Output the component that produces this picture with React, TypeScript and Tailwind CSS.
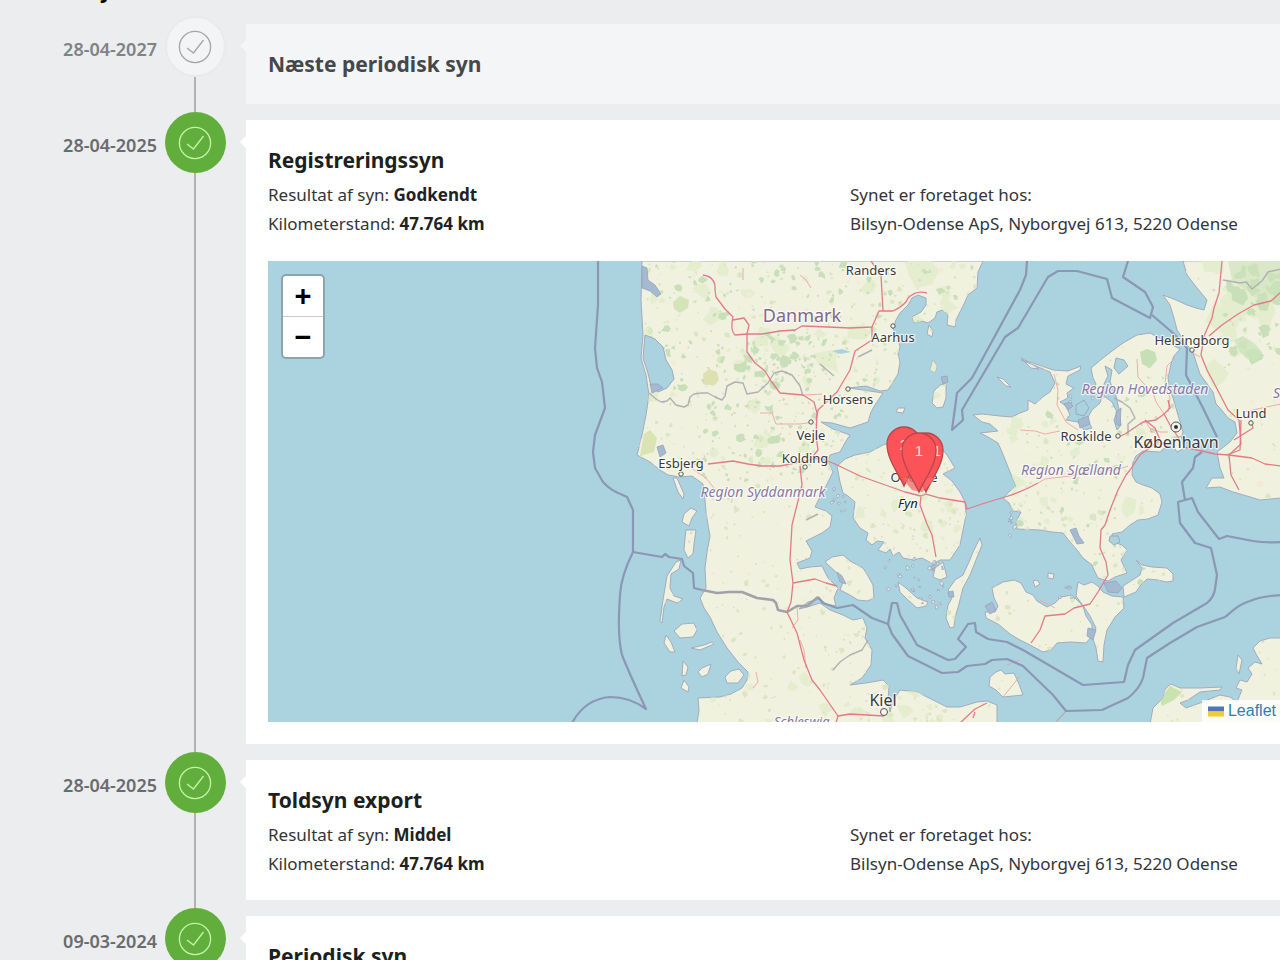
import React from "react";

type Inspection = {
  date: string;
  title: string;
  upcoming?: boolean;
  result?: string;
  mileage?: string;
  place?: string;
  map?: boolean;
};

const INSPECTIONS: Inspection[] = [
  { date: "28-04-2027", title: "Næste periodisk syn", upcoming: true },
  {
    date: "28-04-2025",
    title: "Registreringssyn",
    result: "Godkendt",
    mileage: "47.764 km",
    place: "Bilsyn-Odense ApS, Nyborgvej 613, 5220 Odense",
    map: true,
  },
  {
    date: "28-04-2025",
    title: "Toldsyn export",
    result: "Middel",
    mileage: "47.764 km",
    place: "Bilsyn-Odense ApS, Nyborgvej 613, 5220 Odense",
  },
  { date: "09-03-2024", title: "Periodisk syn" },
];

/* Coastlines, in map units */
const LAND = [
  // Jutland and Schleswig
  "M642 261L641 300L643 335L641 358L646 375L649 395L646 415L641 440L637 455L650 462L660 470L668 475L680 477L692 476L703 484L705 500L706 512L708 525L710 536L707 552L705 568L706 588L700 598L704 608L710 617L717 632L727 648L738 662L748 672L747 680L742 688L731 694L720 697L698 698L699 710L697 723L997 723L997 705L987 701L977 702L960 707L947 707L933 700L917 692L900 690L893 701L890 712L888 700L889 686L883 680L866 683L850 685L862 678L871 665L872 650L865 638L867 628L863 618L853 620L843 615L830 610L820 603L807 607L799 609L808 602L820 599L826 604L836 606L834 598L838 588L828 578L822 566L810 567L800 569L797 563L810 558L812 551L806 541L822 533L830 527L832 516L826 511L815 507L820 497L826 486L833 472L828 462L830 455L840 452L846 441L850 435L833 429L821 422L832 423L850 428L868 422L871 412L875 405L883 393L863 390L849 388L866 386L880 391L888 390L893 382L898 374L900 362L898 354L900 347L897 335L893 329L896 320L900 313L908 305L912 298L918 295L926 298L926 305L921 312L912 317L914 323L922 321L928 323L935 318L937 312L942 310L948 315L947 325L955 327L956 320L960 312L964 304L968 295L977 288L978 272L983 261Z",
  // Als
  "M825 562L832 557L843 555L850 561L863 568L868 576L873 585L874 598L867 601L858 600L848 594L840 590L843 582L838 574Z",
  // Fyn
  "M837 466L845 459L855 455L870 452L883 445L895 441L925 441L935 441L947 455L955 468L943 474L952 481L960 492L965 502L966 515L963 530L960 545L950 560L940 560L933 564L922 558L913 560L903 558L899 552L893 556L890 549L886 553L878 550L884 542L877 541L872 545L866 540L868 533L860 528L853 518L855 502L848 496L843 493L840 482Z",
  // Langeland, Tåsinge, Ærø
  "M980 538L982 545L976 560L970 575L963 588L959 604L955 618L954 627L950 628L946 618L948 605L952 598L948 590L955 580L963 575L969 562L973 552Z",
  "M943 562L947 577L940 580L933 577L935 568Z",
  "M898 582L906 588L917 598L928 602L926 606L917 608L908 600L900 592Z",
  // Samsø and small Kattegat islands
  "M940 385L946 384L946 398L943 407L937 408L932 403L934 391Z",
  "M933 360L937 366L935 373L930 370Z",
  "M929 325L933 331L932 337L927 334Z",
  "M898 408L905 408L903 413L896 412Z",
  "M1021 358L1032 364L1039 369L1031 368Z",
  "M997 377L1003 379L1011 387L1006 386Z",
  // Sjælland
  "M973 415L982 414L1000 416L1012 417L1020 413L1028 410L1028 400L1035 404L1044 396L1050 392L1055 383L1050 372L1036 366L1021 360L1033 363L1053 370L1068 371L1081 366L1080 370L1068 376L1066 384L1074 388L1067 393L1068 398L1060 402L1066 406L1070 415L1066 420L1078 422L1084 430L1092 428L1087 419L1092 410L1100 403L1102 396L1092 392L1096 384L1093 378L1091 368L1103 358L1112 351L1123 343L1137 335L1150 333L1163 340L1180 349L1174 356L1171 364L1168 378L1170 390L1173 398L1178 415L1183 432L1180 443L1172 441L1160 452L1143 451L1136 456L1133 462L1132 475L1136 482L1143 485L1152 488L1160 494L1162 502L1158 515L1148 519L1138 520L1130 525L1122 532L1112 534L1113 542L1122 545L1127 550L1121 560L1127 573L1115 577L1108 581L1098 578L1094 570L1092 565L1083 558L1077 550L1070 542L1063 533L1052 532L1040 530L1017 529L1016 522L1021 512L1013 511L1009 503L1003 498L1010 491L1016 486L1010 472L1006 462L1002 452L998 443L988 437L980 433L998 431L990 424L982 422Z",
  // Amager
  "M1170 441L1181 436L1184 448L1177 452Z",
  // Lolland
  "M992 588L1003 582L1014 580L1021 583L1026 592L1033 595L1037 601L1047 607L1055 603L1061 597L1072 595L1083 606L1086 616L1092 625L1092 636L1086 643L1070 642L1057 643L1051 650L1043 652L1030 645L1020 640L1010 634L998 624L986 618L985 612L995 612L998 606L994 598Z",
  // Falster
  "M1078 582L1084 585L1092 582L1098 586L1103 592L1112 596L1123 597L1124 608L1115 617L1107 630L1104 645L1103 662L1098 661L1096 648L1092 636L1096 628L1090 616L1084 607L1076 596Z",
  // Møn
  "M1123 586L1134 579L1140 575L1142 568L1136 560L1142 565L1152 567L1167 568L1173 574L1173 581L1166 582L1158 580L1147 579L1140 586L1136 592L1124 597Z",
  "M1033 581L1037 580L1040 584L1035 587Z",
  "M1048 573L1054 574L1053 579L1048 578Z",
  // Sweden
  "M1183 261L1187 275L1197 288L1207 300L1204 310L1196 308L1187 305L1176 300L1163 295L1170 305L1174 318L1177 330L1187 345L1193 352L1196 362L1200 374L1213 392L1216 404L1220 408L1228 418L1235 422L1237 433L1230 442L1217 452L1220 468L1224 478L1212 478L1206 488L1220 487L1233 492L1247 496L1260 500L1281 498L1281 260Z",
  // Pomerania
  "M1150 724L1153 708L1163 698L1166 688L1171 684L1180 688L1200 688L1222 687L1220 690L1200 692L1188 700L1180 703L1186 708L1200 703L1220 695L1230 697L1237 702L1242 690L1236 688L1240 680L1247 682L1252 674L1248 668L1255 662L1262 664L1256 654L1253 648L1260 641L1270 638L1281 638L1281 724Z",
  // Fehmarn
  "M990 677L996 672L1001 670L1005 674L1014 673L1019 684L1023 695L1013 696L1003 697L996 690L989 686Z",
  // Wadden islands
  "M673 478L677 478L684 494L683 499L678 492Z",
  "M691 508L697 511L692 518L689 526L682 522L684 514Z",
  "M686 530L696 530L694 544L693 554L688 558L684 550L685 538Z",
  "M676 562L681 560L679 569L671 574L670 588L674 596L683 599L677 603L667 599L664 607L662 623L660 621L663 600L667 576Z",
  "M682 624L694 623L697 630L693 637L680 638L674 631Z",
  "M666 635L671 642L675 652L670 652L664 643Z",
  "M691 648L704 645L712 642L714 644L700 650Z",
  "M702 668L711 664L708 674L702 677L698 672Z",
  "M683 661L688 667L686 675L682 676Z",
  "M731 671L739 669L744 675L738 683L727 683L725 677Z",
  "M684 680L689 687L688 692L681 688Z",
  "M1238 655L1242 660L1239 674L1236 668Z",
];

/* Fjords and lagoons cut into the land */
const WATER = [
  "M645 335L655 339L663 347L666 360L672 370L674 379L667 388L658 392L651 386L648 373L643 358Z",
  "M1105 366L1112 370L1110 382L1116 396L1119 410L1121 425L1117 430L1114 420L1117 412L1112 402L1104 396L1104 384L1108 376Z",
  "M1116 358L1124 360L1128 366L1119 374L1114 368Z",
  "M1076 405L1084 400L1089 408L1084 416L1076 414Z",
  "M1110 536L1118 536L1120 542L1114 545L1109 541Z",
];

const LAGOONS = [
  "M642 266L647 268L648 280L655 285L661 294L657 297L650 291L642 288Z",
  "M650 384L658 384L663 388L652 393Z",
  "M657 447L663 445L666 453L660 457Z",
  "M1064 404L1070 402L1073 406L1068 410Z",
  "M1078 420L1088 416L1090 424L1080 428Z",
  "M1116 412L1121 408L1120 426L1116 424Z",
  "M1070 530L1076 528L1079 536L1084 543L1077 544Z",
  "M1104 583L1116 581L1122 588L1118 593L1108 592Z",
  "M985 606L992 602L996 610L990 614Z",
  "M1088 628L1096 630L1093 640L1087 636Z",
  "M837 572L842 576L846 584L840 582Z",
  "M948 592L953 591L954 597L949 597Z",
  "M941 377L947 376L948 382L943 384Z",
];

/* Maritime and national borders */
const BORDERS = [
  "M598 261L598 305L595 348L597 368L602 382L605 408L595 435L593 452L595 468L603 482C610 490 616 492 627 497L633 510L633 552L662 557L665 554L669 557L682 559L684 566L693 573L694 588L702 590",
  "M818 597L823 603L837 608L853 605L872 618L888 624L892 634L908 656L942 673L958 672L967 666L985 664L992 660L1007 659L1023 666L1053 695L1066 711L1102 710L1128 698C1137 691 1141 684 1143 678L1147 658L1170 643L1197 627L1225 617C1236 608 1240 604 1250 601Q1262 596 1281 595",
  "M888 624L892 603L897 603L900 615L917 645L948 660L955 659L966 647L958 639L968 624L975 623L976 632L988 639L1007 642L1023 650L1083 685L1124 682L1128 665L1135 650L1173 623L1207 603Q1214 597 1215 589L1217 575L1211 548L1195 543L1180 523L1178 502L1192 498L1198 512L1219 539L1227 536L1253 541Q1265 543 1281 542",
  "M1185 500L1182 482L1193 468L1195 457L1202 452",
  "M1027 261L1026 275L1020 290L972 378L957 393L952 430L963 420L962 410L1005 337L1018 328L1048 277L1058 271L1077 271L1107 279L1112 298L1150 318L1153 307L1145 292L1123 277L1128 261",
  "M1152 315L1173 333L1187 348L1186 375L1203 408L1217 437",
  "M633 552Q621 576 620 595Q617 635 622 655Q630 675 646 709Q630 697 610 697Q585 699 572 723",
];

const LAND_BORDER =
  "M702 590L717 593L729 592L742 592L757 598L773 600L776 603L778 610L787 612L797 606L807 606L818 597";

const REGION_LINES = [
  "M649 393L656 399L661 402L667 401L670 398L676 405L684 407L688 405L690 397L694 394L702 393L708 393L715 397L722 400L725 396L727 386L735 382L743 383L747 394L758 392L768 383L774 373L782 371L792 375L800 386L803 396",
  "M1223 280L1240 283L1246 282L1252 289L1262 281L1268 272L1281 269",
  "M1114 398L1122 402L1130 408L1135 418L1128 424L1128 434",
  "M806 520L812 517L818 514",
  "M833 670L840 662L850 655L862 650L868 640",
  "M820 364L834 376M858 357L872 350",
  "M1066 711L1056 722",
];

const ROADS = [
  "M703 275Q716 277 715 290L716 297L725 309L733 317Q730 330 735 335L747 334L747 352L755 363L765 371L771 381L780 393L803 395L814 402L817 413L816 436L818 450L810 460",
  "M733 320L744 318L749 325L747 334L762 334L780 331L795 330L802 326L828 327L850 328L872 327L879 311L893 311Q906 305 908 298Q916 290 927 293",
  "M871 261L881 275L883 311",
  "M872 327L872 340L855 351L850 370L837 392L818 410L816 420",
  "M708 464L733 461L748 464L762 466L780 466L805 461L820 458L835 464L860 476L905 492L921 496L926 494L940 498L965 502L967 509L985 503L1005 497Q1022 492 1038 483",
  "M921 497L920 505L927 524L932 535L936 557",
  "M800 466L802 485L792 525L790 560L793 583L791 602L787 612L797 633L804 660L812 680L820 690L838 716L850 714L884 716",
  "M793 583L815 579L826 583L837 586",
  "M838 716L836 723M960 723L975 709L987 703M973 718L975 712",
  "M1222 261L1219 293L1214 308L1212 318L1204 336L1201 355L1207 370L1215 385L1228 410L1239 420L1241 444L1229 455L1231 475L1239 490",
  "M1209 336L1216 330L1222 325L1238 314L1254 305L1271 301L1281 292",
  "M1251 420L1253 428L1234 440M1229 455L1215 454L1202 451L1183 447M1229 455L1252 458L1265 464L1281 466M1241 420L1240 450L1227 455",
  "M1180 440L1170 425L1164 414L1170 408L1168 400",
  "M1164 414L1156 420L1143 422L1125 434L1116 438",
  "M1145 420L1155 428L1160 440L1140 455L1130 470L1126 475L1118 490L1110 510L1105 525L1101 530L1100 548L1106 562L1108 575L1098 592L1090 604L1074 608L1065 614L1045 616L1040 630L1031 643",
];

const MINOR_ROADS = [
  "M743 268L743 280M800 275L806 280L811 288M760 413L772 413L776 424L800 424L814 422",
  "M690 467L700 474L706 478L714 488M756 672L758 682L753 688M800 640L804 650L806 668",
  "M1040 600L1055 608M1007 665L1020 660M1003 697L1020 676M804 395L822 394",
  "M1137 359L1138 377L1146 386L1153 392L1156 402L1164 414M1175 358L1167 366L1165 384L1170 398L1168 412",
  "M1054 374L1058 390L1057 405L1066 422L1078 430M1020 430L1035 431L1045 434L1060 431",
  "M1038 483L1045 479L1070 476L1090 472L1117 470L1128 466M1150 428L1160 432L1168 432M1145 420L1152 432",
  "M1191 352L1200 357M1244 412L1262 408L1281 404M787 612L797 606L798 620L792 628",
];

function seeded(seed: number) {
  let s = seed;
  return () => {
    s = (s * 16807) % 2147483647;
    return s / 2147483647;
  };
}

/* Irregular patches scattered over a rectangle: woods, heaths, islets */
function patches(seed: number, count: number, x0: number, y0: number, w: number, h: number, max: number) {
  const rnd = seeded(seed);
  let d = "";
  for (let i = 0; i < count; i++) {
    const x = x0 + rnd() * w;
    const y = y0 + rnd() * h;
    const n = 7;
    const r = 1 + rnd() * rnd() * max;
    for (let k = 0; k < n; k++) {
      const a = (k / n) * Math.PI * 2;
      const q = r * (0.4 + rnd() * 0.9);
      d += `${k ? "L" : "M"}${(x + Math.cos(a) * q).toFixed(1)} ${(y + Math.sin(a) * q).toFixed(1)}`;
    }
    d += "Z";
  }
  return d;
}

const BROAD =
  patches(19, 70, 650, 261, 330, 140, 16) +
  patches(29, 16, 740, 330, 90, 40, 18) +
  patches(31, 24, 690, 400, 130, 70, 12) +
  patches(43, 40, 1000, 420, 160, 110, 14) +
  patches(47, 30, 860, 460, 100, 90, 10) +
  patches(59, 30, 700, 680, 250, 42, 12) +
  patches(61, 34, 1215, 265, 65, 110, 22);
const FOREST =
  patches(11, 190, 650, 261, 330, 150, 5) +
  patches(13, 60, 740, 335, 90, 45, 6) +
  patches(23, 90, 690, 400, 150, 80, 4) +
  patches(37, 130, 1000, 345, 180, 240, 4) +
  patches(53, 60, 1225, 265, 55, 105, 11);
const MEADOW =
  patches(71, 420, 640, 261, 340, 460, 3) +
  patches(83, 300, 850, 440, 330, 280, 3) +
  patches(97, 80, 1170, 380, 110, 340, 3);
const HEATH = patches(41, 160, 640, 261, 640, 460, 4);
const FARMS = patches(67, 260, 640, 261, 640, 460, 1);
const ISLETS =
  patches(101, 24, 885, 558, 60, 34, 2) +
  patches(103, 10, 832, 486, 14, 30, 2) +
  patches(107, 8, 920, 585, 28, 24, 2) +
  patches(109, 6, 1010, 512, 8, 26, 2) +
  patches(113, 6, 1060, 585, 16, 14, 2) +
  patches(127, 5, 1070, 385, 24, 24, 3);

const TOWNS: { x: number; y: number; name: string; size: number }[] = [
  { x: 871, y: 275, name: "Randers", size: 13 },
  { x: 893, y: 342, name: "Aarhus", size: 13 },
  { x: 848, y: 404, name: "Horsens", size: 13 },
  { x: 811, y: 440, name: "Vejle", size: 13 },
  { x: 805, y: 463, name: "Kolding", size: 13 },
  { x: 681, y: 468, name: "Esbjerg", size: 13 },
  { x: 914, y: 482, name: "Odense", size: 13 },
  { x: 1192, y: 345, name: "Helsingborg", size: 13 },
  { x: 1086, y: 441, name: "Roskilde", size: 13 },
  { x: 1251, y: 418, name: "Lund", size: 13 },
  { x: 883, y: 706, name: "Kiel", size: 16 },
  { x: 1176, y: 448, name: "København", size: 16 },
];

const REGIONS: { x: number; y: number; name: string }[] = [
  { x: 763, y: 497, name: "Region Syddanmark" },
  { x: 1145, y: 394, name: "Region Hovedstaden" },
  { x: 1071, y: 475, name: "Region Sjælland" },
];

const DOTS = [
  [893, 326], [848, 389], [811, 422], [805, 467], [681, 474], [1192, 350], [1118, 436], [1251, 423],
];

function Pin({ x, y, label, labelX }: { x: number; y: number; label: string; labelX?: number }) {
  return (
    <g>
      <path
        d={`M${x} ${y + 59}C${x - 5} ${y + 47} ${x - 17} ${y + 33} ${x - 17} ${y + 17}A17 17 0 0 1 ${x + 17} ${y + 17}C${x + 17} ${y + 33} ${x + 5} ${y + 47} ${x} ${y + 59}Z`}
        fill="#fb5357"
        stroke="#b4484c"
        strokeWidth="1.3"
      />
      <text x={labelX ?? x} y={y + 23} textAnchor="middle" fontSize="15" fill="#fde0d4">
        {label}
      </text>
    </g>
  );
}

function DenmarkMap() {
  return (
    <svg
      viewBox="268 261 1012 461"
      preserveAspectRatio="xMidYMid slice"
      className="block h-full w-full font-['Noto_Sans',sans-serif]"
      role="img"
      aria-label="Kort over synshaller"
    >
      <defs>
        <clipPath id="land">
          {LAND.map((d, i) => (
            <path key={i} d={d} />
          ))}
        </clipPath>
      </defs>
      <rect x="267" y="260" width="1014" height="464" fill="#aad3df" />
      {LAND.map((d, i) => (
        <path key={i} d={d} fill="#f1f1df" stroke="#a3abbd" strokeWidth="1" strokeLinejoin="round" />
      ))}
      <path d={ISLETS} fill="#e6eadf" stroke="#98a3c0" strokeWidth="0.8" />
      <g clipPath="url(#land)">
        <path d={BROAD} fill="#e2ecca" opacity="0.8" />
        <path d={HEATH} fill="#f3ead9" />
        <path d={MEADOW} fill="#dbe6c3" />
        <path d={FOREST} fill="#c8dfb9" />
        <path d={FARMS} fill="#d3d3c0" opacity="0.7" />
        <path d="M1228 261L1281 261L1281 300L1262 304L1246 290L1232 280Z" fill="#cbe2bb" opacity="0.6" />
        <path d="M703 374L709 369L717 372L719 380L713 386L704 383Z" fill="#dde0b0" />
        <path d="M673 302L680 296L689 300L688 308L680 313L674 309Z" fill="#d3e4b8" />
        <path d="M644 434L650 430L657 438L654 452L640 456Z" fill="#d9e3b4" />
        <path d="M1140 352L1147 349L1155 352L1157 360L1150 368L1142 364Z" fill="#c6e0b5" />
        <path d="M1160 700L1170 686L1182 692L1174 700L1162 706Z" fill="#c9e2ae" />
        <path d="M1234 340L1243 336L1254 343L1262 352L1256 362L1246 358L1240 352Z" fill="#cbe3ba" opacity="0.8" />
        <path d="M832 351L842 349L851 352L840 354Z" fill="#aad3df" />
      </g>
      {WATER.map((d, i) => (
        <path key={i} d={d} fill="#aad3df" stroke="#9fa9bd" strokeWidth="1" />
      ))}
      {LAGOONS.map((d, i) => (
        <path key={i} d={d} fill="#a5b9d0" stroke="#96a3bf" strokeWidth="0.8" />
      ))}
      <g fill="none" strokeLinejoin="round">
        {REGION_LINES.map((d, i) => (
          <path key={i} d={d} stroke="#b3b0b4" strokeWidth="1.4" />
        ))}
        {MINOR_ROADS.map((d, i) => (
          <path key={i} d={d} stroke="#eda5a3" strokeWidth="0.9" />
        ))}
        {BORDERS.map((d, i) => (
          <path key={i} d={d} stroke="#8b97b4" strokeWidth="2.2" />
        ))}
        <path d={LAND_BORDER} stroke="#a3a1a8" strokeWidth="2.6" />
        {ROADS.map((d, i) => (
          <path key={i} d={d} stroke="#e27b89" strokeWidth="1.3" />
        ))}
      </g>
      <g fill="#f5f5ef" stroke="#555" strokeWidth="1">
        {DOTS.map(([x, y]) => (
          <circle key={`${x}-${y}`} cx={x} cy={y} r="2.2" />
        ))}
        <circle cx="884" cy="712" r="3.5" />
        <circle cx="1176" cy="427" r="5" />
      </g>
      <circle cx="1176" cy="427" r="2" fill="#333" />
      <g stroke="#ffffff" strokeOpacity="0.7" strokeWidth="2.5" strokeLinejoin="round" paintOrder="stroke" textAnchor="middle">
        <text x="802" y="322" fontSize="18" fill="#82688a">
          Danmark
        </text>
        {TOWNS.map((t) => (
          <text key={t.name} x={t.x} y={t.y} fontSize={t.size} fill="#3b3b3b">
            {t.name}
          </text>
        ))}
        {REGIONS.map((r) => (
          <text key={r.name} x={r.x} y={r.y} fontSize="14" fontStyle="italic" fill="#8a7aa3">
            {r.name}
          </text>
        ))}
        <text x="908" y="508" fontSize="13" fontStyle="italic" fill="#222">
          Fyn
        </text>
        <text x="774" y="726" fontSize="13" fontStyle="italic" fill="#85749c" textAnchor="start">
          Schleswig-
        </text>
        <text x="1273" y="398" fontSize="14" fontStyle="italic" fill="#85749c" textAnchor="start">
          S
        </text>
      </g>
      <g className="font-['Liberation_Sans',sans-serif]">
        <Pin x={904} y={427} label="2" />
        <Pin x={926} y={433} label="1" labelX={937} />
        <path d="M902 478L936 478L922 492L912 490Z" fill="#f8686b" opacity="0.75" />
        <Pin x={919} y={433} label="1" />
      </g>
    </svg>
  );
}

function MapPanel() {
  return (
    <div className="relative mt-[23px] h-[461px] overflow-hidden bg-[#aad3df]">
      <DenmarkMap />
      <div className="absolute top-[13px] left-[13px] flex w-[44px] flex-col overflow-hidden rounded-[5px] border-2 border-[#8aa5b0] bg-white font-['Liberation_Sans',sans-serif] text-[29px] leading-none font-bold text-black">
        <button type="button" aria-label="Zoom ind" className="flex h-[41px] items-center justify-center border-b border-[#ccc]">
          <span aria-hidden="true">+</span>
        </button>
        <button type="button" aria-label="Zoom ud" className="flex h-[40px] items-center justify-center">
          <span aria-hidden="true">−</span>
        </button>
      </div>
      <div className="absolute right-0 bottom-0 flex h-[22px] items-center bg-white/80 pr-1 pl-1.5 font-['Liberation_Sans',sans-serif] text-[16px] leading-none">
        <a href="#leaflet" className="flex items-center gap-1 text-[#2f7fad]">
          <svg viewBox="0 0 16 10" className="h-[11px] w-4" aria-hidden="true">
            <path fill="#4f74b8" d="M0 0h16v5H0z" />
            <path fill="#f2cb2e" d="M0 5h16v5H0z" />
          </svg>
          Leaflet
        </a>
      </div>
    </div>
  );
}

function StatusBadge({ upcoming }: { upcoming?: boolean }) {
  return (
    <div
      className={
        upcoming
          ? "flex size-[61px] shrink-0 items-center justify-center rounded-full border-2 border-[#e8eaeb] bg-[#f3f4f6] text-[#a3a5a8]"
          : "flex size-[61px] shrink-0 items-center justify-center rounded-full bg-[#62ae3c] text-[#c4f5a8]"
      }
    >
      <svg viewBox="0 0 34 34" className="size-[34px]" fill="none" stroke="currentColor" strokeWidth="1.3" aria-hidden="true">
        <circle cx="17" cy="17" r="15.6" />
        <path d="M9 18L15.500 23L25.500 10" />
      </svg>
    </div>
  );
}

function TimelineRow({ item, last }: { item: Inspection; last: boolean }) {
  return (
    <li className="grid grid-cols-[158px_74px_minmax(0,1fr)]">
      <time
        className={
          item.upcoming
            ? "pt-[19px] pr-px text-right text-[18px] leading-7 font-semibold text-[#808285]"
            : "pt-[19px] pr-px text-right text-[18px] leading-7 font-semibold text-[#6a6b6e]"
        }
      >
        {item.date}
      </time>
      <div className="flex flex-col items-center">
        <StatusBadge upcoming={item.upcoming} />
        {!last && <div className="w-[2px] flex-1 bg-[#b0b2b4]" />}
      </div>
      <div
        className={
          item.upcoming
            ? "relative my-2 ml-[14px] bg-[#f3f5f6] pt-6 pb-6 pl-[22px]"
            : "relative my-2 ml-[14px] bg-white pt-6 pb-[22px] pl-[22px]"
        }
      >
        <span
          className={
            item.upcoming
              ? "absolute top-4 -left-1.5 border-y-6 border-r-6 border-y-transparent border-r-[#f3f5f6]"
              : "absolute top-4 -left-1.5 border-y-6 border-r-6 border-y-transparent border-r-white"
          }
        />
        <h2
          className={
            item.upcoming
              ? "text-[21px] leading-8 font-bold text-[#45484b]"
              : "text-[21px] leading-8 font-bold text-[#1d1f21]"
          }
        >
          {item.title}
        </h2>
        {item.result && (
          <div className="mt-1 grid grid-cols-[582px_minmax(0,1fr)] text-[17px] leading-[29px] text-[#333537]">
            <div>
              <p>
                Resultat af syn: <strong className="text-[#222]">{item.result}</strong>
              </p>
              <p>
                Kilometerstand: <strong className="text-[#222]">{item.mileage}</strong>
              </p>
            </div>
            <div>
              <p>Synet er foretaget hos:</p>
              <p>{item.place}</p>
            </div>
          </div>
        )}
        {item.map && <MapPanel />}
      </div>
    </li>
  );
}

export default function App() {
  return (
    <main className="flex min-h-screen flex-col bg-[#ebedee] font-['Noto_Sans',sans-serif]">
      <h1 className="-mt-[26px] mb-[10px] pl-[63px] text-[21px] leading-8 font-bold text-black">Bilsyn</h1>
      <ol>
        {INSPECTIONS.map((item, i) => (
          <TimelineRow key={i} item={item} last={i === INSPECTIONS.length - 1} />
        ))}
      </ol>
    </main>
  );
}
